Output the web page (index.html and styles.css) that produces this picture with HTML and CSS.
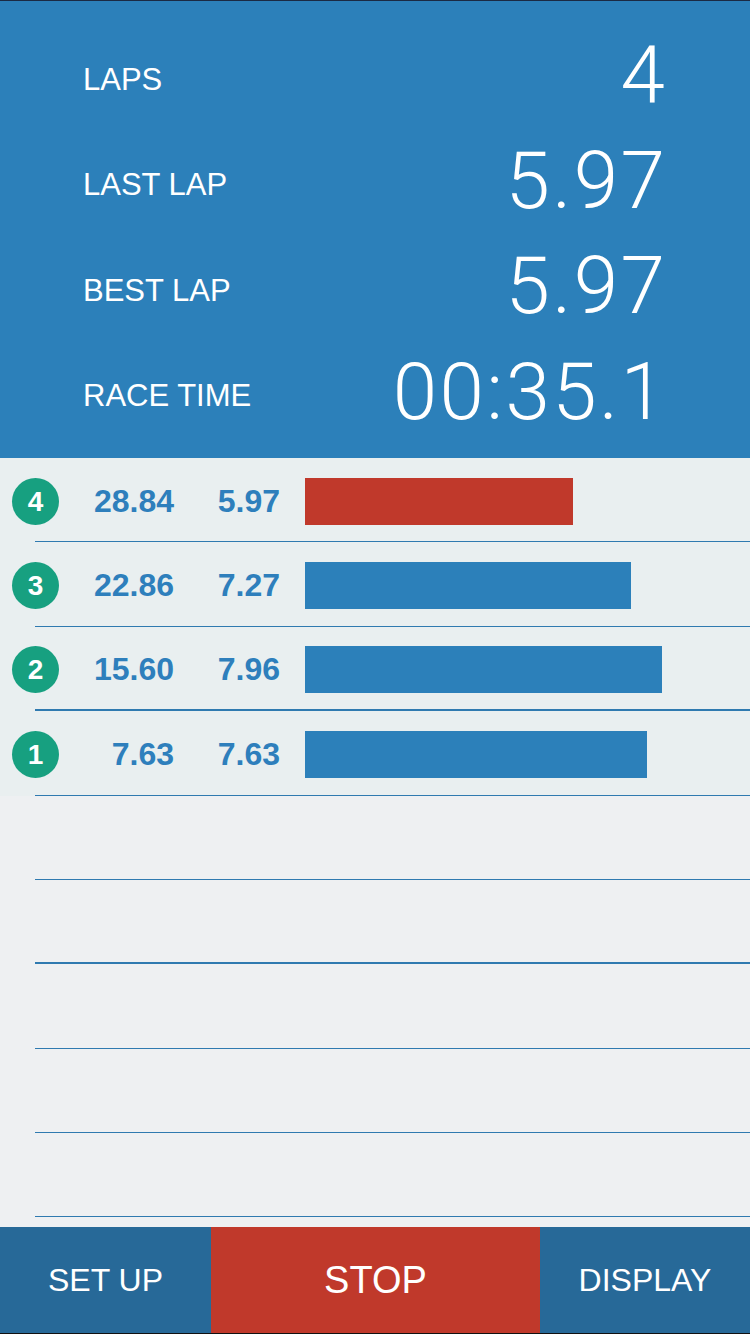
FILE: index.html
```html
<!DOCTYPE html>
<html>
<head>
<title>Lap Timer</title>
<meta charset="UTF-8">
<meta name="viewport" content="width=device-width, initial-scale=1.0">
<link rel="stylesheet" href="styles.css">
</head>
<body>
<div id="screen">

	<div class="stats">
		<div class="stat">
			<span class="stat_label">LAPS</span>
			<span class="stat_value">4</span>
		</div>
		<div class="stat">
			<span class="stat_label">LAST LAP</span>
			<span class="stat_value">5.97</span>
		</div>
		<div class="stat">
			<span class="stat_label">BEST LAP</span>
			<span class="stat_value">5.97</span>
		</div>
		<div class="stat">
			<span class="stat_label">RACE TIME</span>
			<span class="stat_value">00:35.1</span>
		</div>
	</div>

	<ul class="laps">
		<li class="lap done">
			<span class="badge">4</span>
			<span class="total">28.84</span>
			<span class="split">5.97</span>
			<span class="bar best" style="width: 268px"></span>
		</li>
		<li class="lap done">
			<span class="badge">3</span>
			<span class="total">22.86</span>
			<span class="split">7.27</span>
			<span class="bar" style="width: 326px"></span>
		</li>
		<li class="lap done thick">
			<span class="badge">2</span>
			<span class="total">15.60</span>
			<span class="split">7.96</span>
			<span class="bar" style="width: 357px"></span>
		</li>
		<li class="lap done">
			<span class="badge">1</span>
			<span class="total">7.63</span>
			<span class="split">7.63</span>
			<span class="bar" style="width: 342px"></span>
		</li>
		<li class="lap"></li>
		<li class="lap thick"></li>
		<li class="lap"></li>
		<li class="lap"></li>
		<li class="lap"></li>
	</ul>

	<div class="toolbar">
		<button class="tool">SET UP</button>
		<button class="tool stop">STOP</button>
		<button class="tool">DISPLAY</button>
	</div>

</div>
</body>
</html>
```

FILE: styles.css
```css
html, body {
	margin: 0;
	padding: 0;
}

body {
	background-color: #eef0f2;
	font-family: "Liberation Sans", Arial, sans-serif;
}

#screen {
	width: 750px;
	height: 1334px;
	display: flex;
	flex-direction: column;
	overflow: hidden;
}

/**************************
/******HEADER STATS
/**/
.stats {
	background-color: #2c80ba;
	border-top: 1px solid #1b2a44;
	height: 458px;
	flex: none;
	box-sizing: border-box;
	padding: 26px 85px 10px 83px;
}

.stat {
	display: flex;
	align-items: center;
	justify-content: space-between;
	height: 105.5px;
	color: #ffffff;
}

.stat_label {
	font-size: 31px;
}

.stat_value {
	font-family: Roboto, "Liberation Sans", sans-serif;
	font-weight: 300;
	font-size: 80px;
	line-height: 80px;
	letter-spacing: 2.4px;
	margin-right: -2.4px;
	margin-bottom: 9px;
}

/**************************
/******LAP LIST
/**/
.laps {
	list-style: none;
	margin: 0;
	padding: 0;
	height: 769px;
	flex: none;
}

.lap {
	display: flex;
	align-items: center;
	height: 84.375px;
	box-sizing: border-box;
	padding-left: 12px;
	padding-top: 2px;
	background: linear-gradient(#2f7ab0, #2f7ab0) no-repeat 35px 100% / calc(100% - 35px) 1px;
}

.lap.done {
	background-color: #e9eff0;
}

.lap.thick {
	background-size: calc(100% - 35px) 2px;
}

.badge {
	width: 47px;
	height: 47px;
	border-radius: 50%;
	background-color: #17a080;
	color: #ffffff;
	font-weight: bold;
	font-size: 28px;
	line-height: 47px;
	text-align: center;
	flex: none;
}

.total, .split {
	color: #2e7fbc;
	font-weight: bold;
	font-size: 32px;
	text-align: right;
	flex: none;
}

.total {
	width: 115px;
}

.split {
	width: 106px;
}

.bar {
	height: 47px;
	margin-left: 25px;
	background-color: #2c80ba;
}

.bar.best {
	background-color: #c0392b;
}

/**************************
/******TOOLBAR
/**/
.toolbar {
	display: flex;
	height: 107px;
	flex: none;
	box-sizing: border-box;
	border-bottom: 1px solid #111111;
}

.tool {
	border: none;
	margin: 0;
	padding: 0;
	width: 211px;
	background-color: #276998;
	color: #ffffff;
	font-family: "Liberation Sans", Arial, sans-serif;
	font-size: 32px;
}

.tool.stop {
	width: 329px;
	background-color: #c0392b;
	font-size: 38px;
}

.tool:last-child {
	width: 210px;
}
```
